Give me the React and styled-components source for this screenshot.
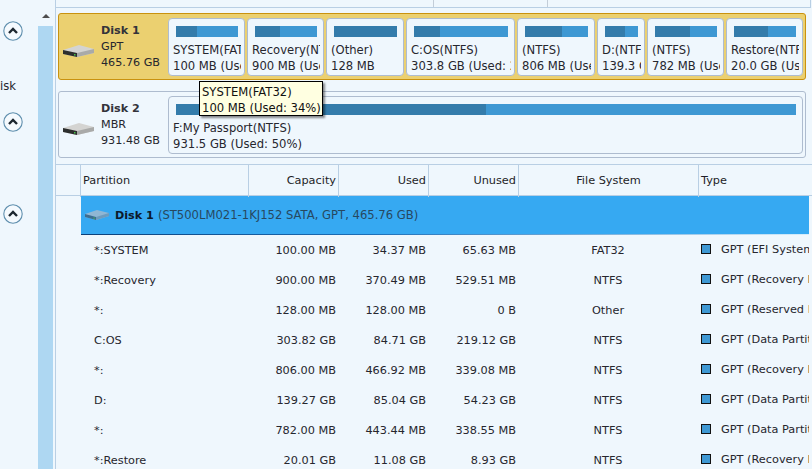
import React from "react";
import styled, {createGlobalStyle} from "styled-components";

const GlobalStyle = createGlobalStyle`
    html, body {
        margin: 0;
        padding: 0;
        width: 812px;
        height: 469px;
        overflow: hidden;
        background: #eff7fd;
        font-family: "DejaVu Sans", "Noto Sans", sans-serif;
        font-size: 11.3px;
        color: #26262e;
    }
`;

const Page = styled.div`
    display: flex;
    width: 812px;
    height: 469px;
    overflow: hidden;
`;

const Sidebar = styled.aside`
    width: 38px;
    flex: none;
    overflow: hidden;
    padding: 21px 0 0 3px;
    box-sizing: border-box;
    display: flex;
    flex-direction: column;
`;

const SideLabel = styled.div`
    margin: 36px 0 0 -12px;
    height: 18px;
    line-height: 18px;
    white-space: nowrap;
    font-size: 11.6px;
`;

const SideIcon = styled.svg`
    width: 20px;
    height: 20px;
    flex: none;
    margin-top: ${(p) => p.$top || 0}px;
`;

const Track = styled.div`
    width: 15px;
    flex: none;
    display: flex;
    flex-direction: column;
`;

const TrackArrow = styled.div`
    height: 26px;
    display: flex;
    justify-content: center;
    padding-top: 14px;
    box-sizing: border-box;
`;

const TrackThumb = styled.div`
    flex: 1;
    background: #aed7f2;
`;

const Main = styled.main`
    margin-left: 2px;
    flex: 1;
    border-left: 1px solid #b9cfe4;
    position: relative;
    min-width: 0;
`;

const TopStrip = styled.div`
    height: 7px;
    border-bottom: 1px solid #b9cfe4;
    display: flex;
    margin-right: 1px;
    border-right: 1px solid #b9cfe4;
`;

const TopTick = styled.span`
    width: 113px;
    border-left: 1px solid #c3cdd8;
    margin-left: ${(p) => p.$left || 0}px;
`;

const Disks = styled.section`
    padding: 5px 6px 0 2px;
    display: flex;
    flex-direction: column;
    gap: 11px;
`;

const DiskCard = styled.div`
    height: 67px;
    box-sizing: border-box;
    border-radius: 3px;
    display: flex;
    align-items: center;
    padding: 0 2px 0 3px;
    background: ${(p) => (p.$active ? "#ebd070" : "#eff7fd")};
    border: 1px solid ${(p) => (p.$active ? "#c9920f" : "#aebccf")};
`;

const DiskIconBox = styled.div`
    width: 39px;
    flex: none;
    display: flex;
    padding-top: 8px;
`;

const DiskInfo = styled.div`
    width: 67px;
    flex: none;
    line-height: 16px;
    font-size: 11.2px;
    white-space: nowrap;
`;

const DiskName = styled.div`
    font-weight: 700;
    font-size: 11.2px;
    color: #33333a;
`;

const Partitions = styled.div`
    flex: 1;
    display: flex;
    gap: 2px;
    min-width: 0;
`;

const PartitionCard = styled.div`
    box-sizing: border-box;
    flex: ${(p) => (p.$grow ? "1" : `0 0 ${p.$width}px`)};
    height: 58px;
    background: #eff7fd;
    border: 1px solid #aebccf;
    border-radius: 4px;
    padding: 7px 6px 0 7px;
    overflow: hidden;
`;

const Bar = styled.div`
    height: 11px;
    background: #3e98d3;
`;

const BarUsed = styled.div`
    height: 100%;
    background: #347cab;
`;

const PartitionLabels = styled.div`
    margin: 5px -3px 0 -3px;
    font-size: 11.6px;
    line-height: 16px;
`;

const PartitionText = styled.div`
    overflow: hidden;
    white-space: nowrap;
`;

const Tooltip = styled.div`
    position: absolute;
    left: 143px;
    top: 81px;
    width: 124px;
    height: 35px;
    box-sizing: border-box;
    background: #ffffe1;
    border: 1px solid #000;
    box-shadow: 2px 2px 2px rgba(0, 0, 0, 0.45);
    padding: 2px 2px 0;
    font-size: 11.6px;
    line-height: 16px;
    color: #111;
    white-space: nowrap;
`;

const Table = styled.section`
    margin-top: 6px;
    border-top: 1px solid #b9cfe4;
`;

const HeaderRow = styled.div`
    display: grid;
    grid-template-columns: 24px 168px 90px 90px 90px 180px 1fr;
    height: 30px;
    border-bottom: 1px solid #b9cfe4;
`;

const HeaderCell = styled.div`
    box-sizing: border-box;
    border-left: ${(p) => (p.$first ? "none" : "1px solid #b9cfe4")};
    line-height: 32px;
    padding: 0 2px;
    color: #1e1e28;
    text-align: ${(p) => p.$align || "left"};
`;

const DiskRow = styled.div`
    margin: 0 3px 0 25px;
    height: 39px;
    background: #36a9f2;
    border-bottom: 1px solid;
    border-image: linear-gradient(to right, #0c3f78 0%, #1c6fb8 40%, #d7eefc 100%) 1;
    box-sizing: border-box;
    display: flex;
    align-items: center;
    padding-left: 3px;
    white-space: nowrap;
    overflow: hidden;
`;

const DiskRowName = styled.b`
    margin: 0 4px 0 5px;
    font-size: 11.2px;
    color: #0c1a2a;
`;

const DiskRowText = styled.span`
    color: #27485f;
    font-size: 11.6px;
`;

const Row = styled.div`
    display: grid;
    grid-template-columns: 24px 168px 90px 90px 90px 180px 1fr;
    height: 30px;
    line-height: 32px;
    margin-right: 3px;
`;

const Cell = styled.div`
    padding: 0 2px;
    white-space: nowrap;
    overflow: hidden;
    text-align: ${(p) => p.$align || "left"};
    padding-left: ${(p) => p.$indent || 2}px;
`;

const TypeCell = styled(Cell)`
    display: flex;
    align-items: center;
    padding-left: 3px;
    padding-right: 0;
`;

const TypeSwatch = styled.span`
    width: 8px;
    height: 8px;
    flex: none;
    margin-right: 10px;
    margin-top: -3px;
    background: #3e98d3;
    border: 1px solid #111;
`;

const partitions = [
    {width: 77, used: 34, name: "SYSTEM(FAT32)", size: "100 MB (Used: 34%)"},
    {width: 77, used: 41, name: "Recovery(NTFS)", size: "900 MB (Used: 41%)"},
    {width: 78, used: 100, name: "(Other)", size: "128 MB"},
    {width: 109, used: 28, name: "C:OS(NTFS)", size: "303.8 GB (Used: 28%)"},
    {width: 78, used: 58, name: "(NTFS)", size: "806 MB (Used: 58%)"},
    {width: 48, used: 61, name: "D:(NTFS)", size: "139.3 GB (Used: 61%)"},
    {width: 77, used: 57, name: "(NTFS)", size: "782 MB (Used: 57%)"},
    {grow: true, used: 55, name: "Restore(NTFS)", size: "20.0 GB (Used: 55%)"},
];

const rows = [
    ["*:SYSTEM", "100.00 MB", "34.37 MB", "65.63 MB", "FAT32", "GPT (EFI System partition)"],
    ["*:Recovery", "900.00 MB", "370.49 MB", "529.51 MB", "NTFS", "GPT (Recovery Partition)"],
    ["*:", "128.00 MB", "128.00 MB", "0 B", "Other", "GPT (Reserved Partition)"],
    ["C:OS", "303.82 GB", "84.71 GB", "219.12 GB", "NTFS", "GPT (Data Partition)"],
    ["*:", "806.00 MB", "466.92 MB", "339.08 MB", "NTFS", "GPT (Recovery Partition)"],
    ["D:", "139.27 GB", "85.04 GB", "54.23 GB", "NTFS", "GPT (Data Partition)"],
    ["*:", "782.00 MB", "443.44 MB", "338.55 MB", "NTFS", "GPT (Data Partition)"],
    ["*:Restore", "20.01 GB", "11.08 GB", "8.93 GB", "NTFS", "GPT (Recovery Partition)"],
];

const Collapse = ({top}) => (
    <SideIcon $top={top} viewBox="0 0 20 20">
        <circle cx="10" cy="10" r="9.2" fill="#f5fafe" stroke="#5f8fae" strokeWidth="1.1"/>
        <path d="M6 12 L10 8 L14 12" fill="none" stroke="#1d2730" strokeWidth="2.4"/>
    </SideIcon>
);

const HardDrive = () => (
    <svg width="33" height="14" viewBox="0 0 33 14">
        <path d="M1 6 L17 1 L32 5 L32 9 L15 13 L1 10 Z" fill="#d4d4d2"/>
        <path d="M1 6 L15 9 L15 13 L1 10 Z" fill="#2d2f2e"/>
        <path d="M15 9 L32 5 L32 9 L15 13 Z" fill="#a9aaa9"/>
        <rect x="12" y="10" width="1.5" height="1.5" fill="#46c24a"/>
    </svg>
);

const FlatDrive = () => (
    <svg width="26" height="12" viewBox="0 0 26 12">
        <path d="M1 5 L13 1 L25 4 L25 7 L12 11 L1 8 Z" fill="#8fb6d4"/>
        <path d="M1 5 L12 8 L12 11 L1 8 Z" fill="#3b6d92"/>
        <path d="M12 8 L25 4 L25 7 L12 11 Z" fill="#6d9bbd"/>
        <rect x="9.5" y="8.5" width="1.2" height="1.2" fill="#46c24a"/>
    </svg>
);

const UpArrow = () => (
    <svg width="8" height="4" viewBox="0 0 8 4">
        <path d="M0 4 L4 0 L8 4 Z" fill="#4d4d4d"/>
    </svg>
);

export default function App() {
    return (
        <Page>
            <GlobalStyle/>
            <Sidebar>
                <Collapse/>
                <SideLabel>Disk</SideLabel>
                <Collapse top={17}/>
                <Collapse top={72}/>
            </Sidebar>
            <Track>
                <TrackArrow><UpArrow/></TrackArrow>
                <TrackThumb/>
            </Track>
            <Main>
                <TopStrip>
                    <TopTick $left={377}/>
                    <TopTick/>
                </TopStrip>
                <Disks>
                    <DiskCard $active>
                        <DiskIconBox><HardDrive/></DiskIconBox>
                        <DiskInfo>
                            <DiskName>Disk 1</DiskName>
                            <div>GPT</div>
                            <div>465.76 GB</div>
                        </DiskInfo>
                        <Partitions>
                            {partitions.map((p, i) => (
                                <PartitionCard key={i} $width={p.width} $grow={p.grow}>
                                    <Bar><BarUsed style={{width: p.used + "%"}}/></Bar>
                                    <PartitionLabels>
                                        <PartitionText>{p.name}</PartitionText>
                                        <PartitionText>{p.size}</PartitionText>
                                    </PartitionLabels>
                                </PartitionCard>
                            ))}
                        </Partitions>
                    </DiskCard>
                    <DiskCard>
                        <DiskIconBox><HardDrive/></DiskIconBox>
                        <DiskInfo>
                            <DiskName>Disk 2</DiskName>
                            <div>MBR</div>
                            <div>931.48 GB</div>
                        </DiskInfo>
                        <Partitions>
                            <PartitionCard $grow>
                                <Bar><BarUsed style={{width: "50%"}}/></Bar>
                                <PartitionLabels>
                                    <PartitionText>F:My Passport(NTFS)</PartitionText>
                                    <PartitionText>931.5 GB (Used: 50%)</PartitionText>
                                </PartitionLabels>
                            </PartitionCard>
                        </Partitions>
                    </DiskCard>
                </Disks>
                <Table>
                    <HeaderRow>
                        <HeaderCell $first/>
                        <HeaderCell>Partition</HeaderCell>
                        <HeaderCell $align="right">Capacity</HeaderCell>
                        <HeaderCell $align="right">Used</HeaderCell>
                        <HeaderCell $align="right">Unused</HeaderCell>
                        <HeaderCell $align="center">File System</HeaderCell>
                        <HeaderCell>Type</HeaderCell>
                    </HeaderRow>
                    <DiskRow>
                        <FlatDrive/>
                        <DiskRowName>Disk 1</DiskRowName>
                        <DiskRowText>(ST500LM021-1KJ152 SATA, GPT, 465.76 GB)</DiskRowText>
                    </DiskRow>
                    {rows.map((r, i) => (
                        <Row key={i}>
                            <span/>
                            <Cell $indent={14}>{r[0]}</Cell>
                            <Cell $align="right">{r[1]}</Cell>
                            <Cell $align="right">{r[2]}</Cell>
                            <Cell $align="right">{r[3]}</Cell>
                            <Cell $align="center">{r[4]}</Cell>
                            <TypeCell><TypeSwatch/>{r[5]}</TypeCell>
                        </Row>
                    ))}
                </Table>
                <Tooltip>
                    SYSTEM(FAT32)
                    <br/>
                    100 MB (Used: 34%)
                </Tooltip>
            </Main>
        </Page>
    );
}
